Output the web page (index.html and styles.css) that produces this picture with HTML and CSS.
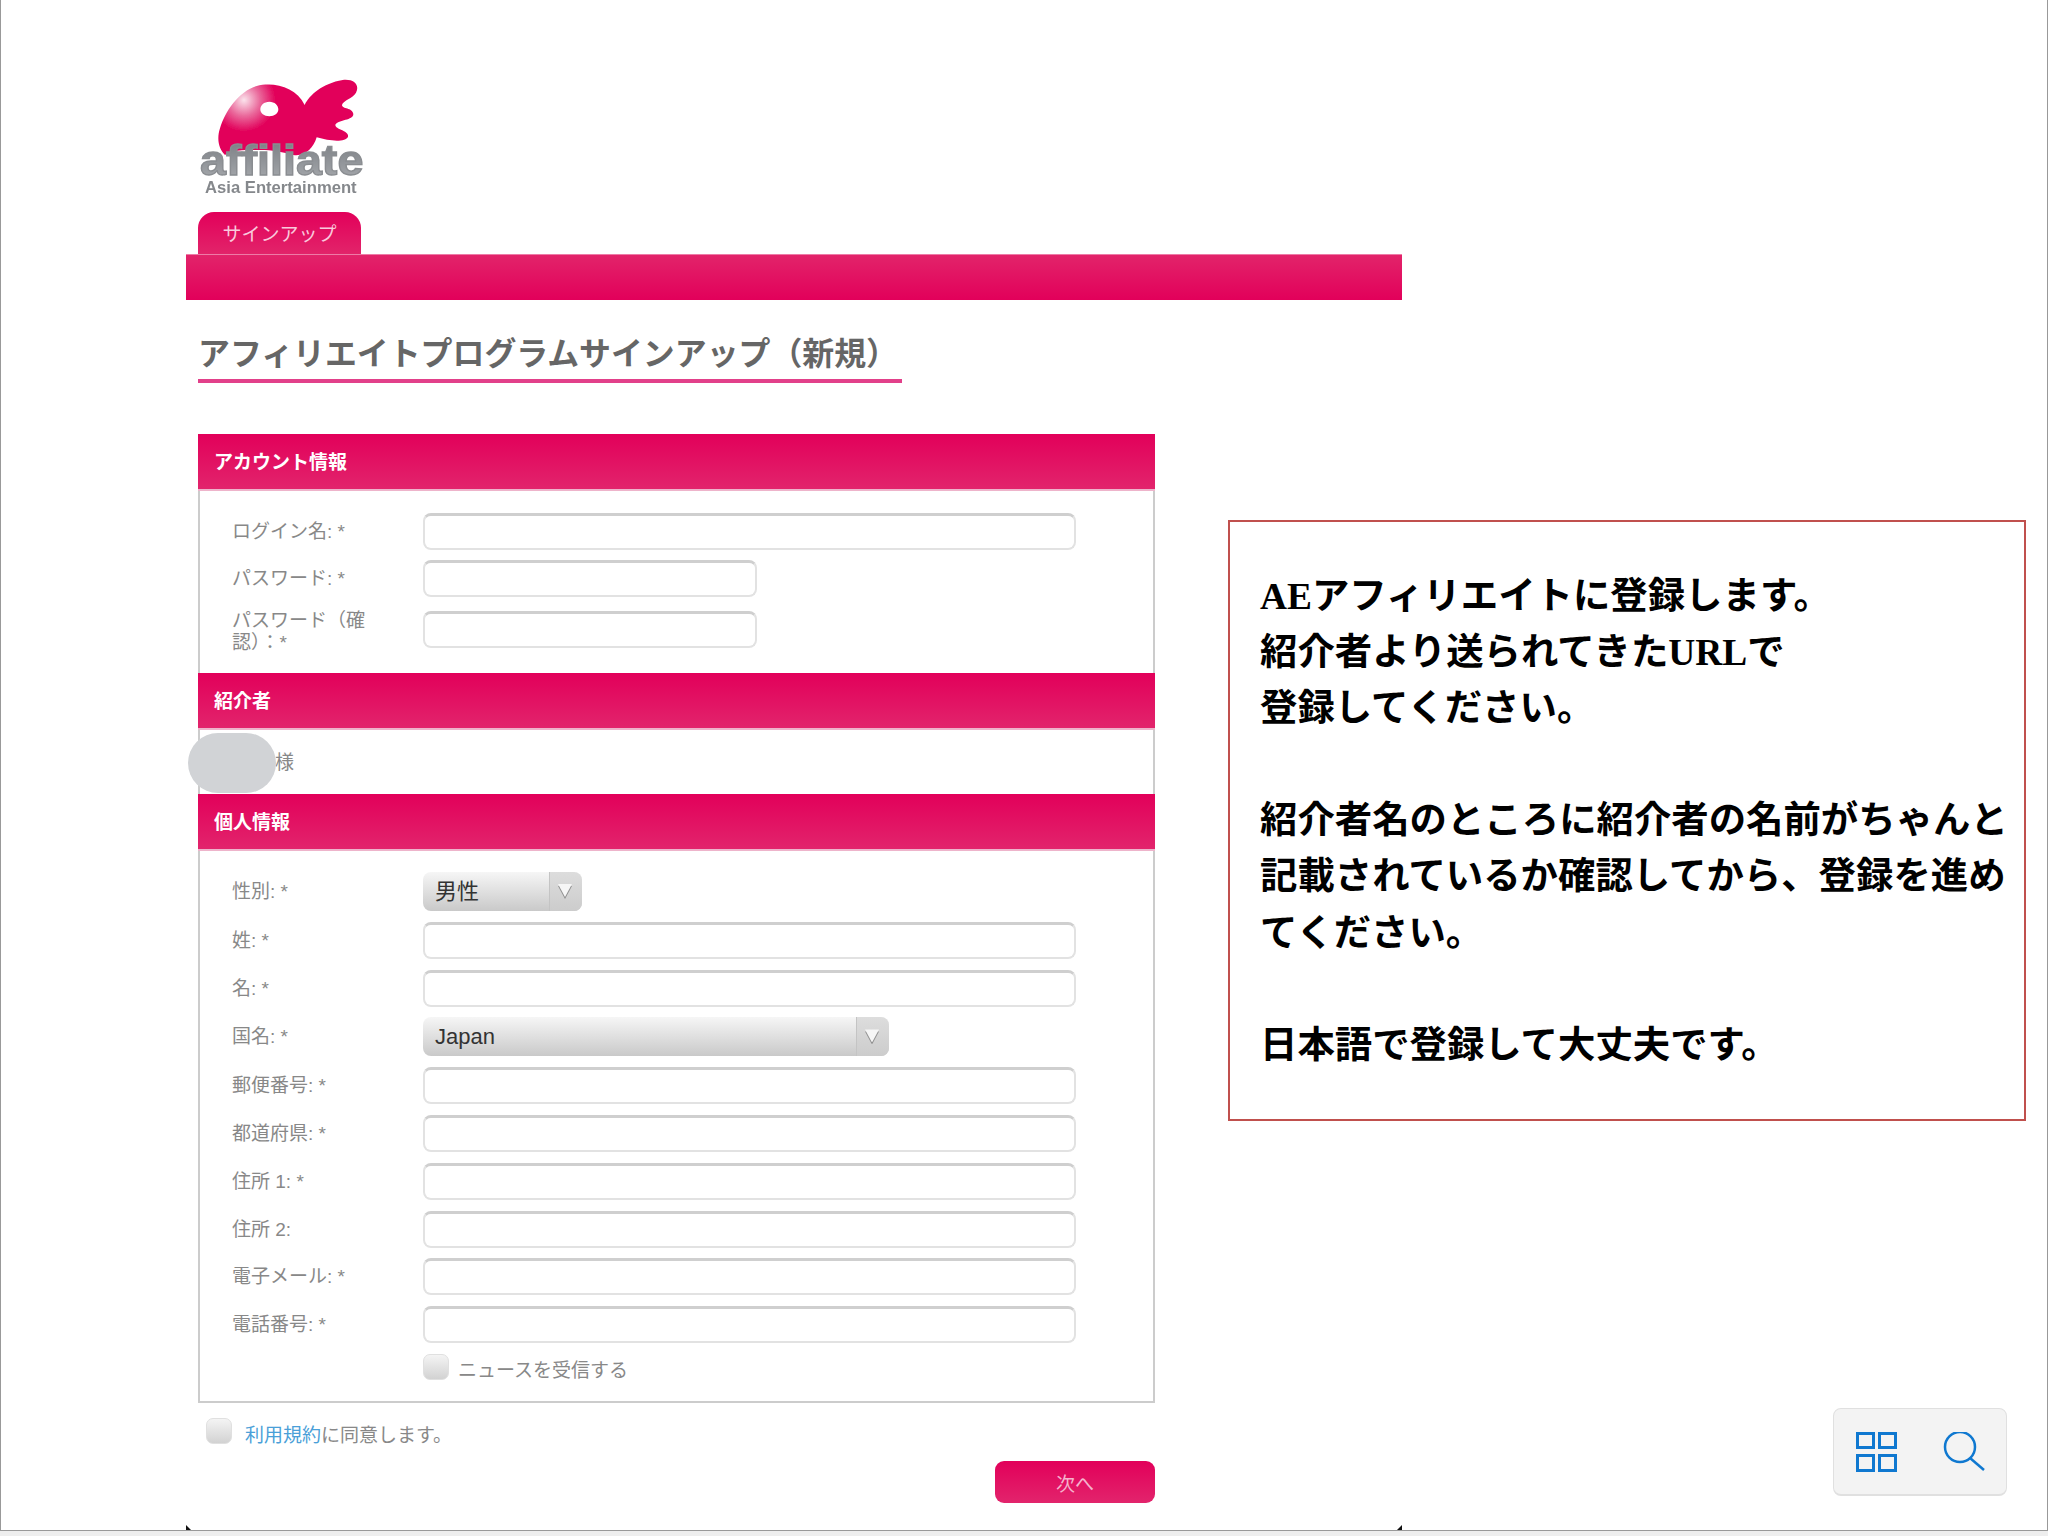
FILE: index.html
```html
<!DOCTYPE html>
<html lang="ja">
<head>
    <meta charset="UTF-8">
    <title>アフィリエイトプログラムサインアップ（新規）</title>
    <link rel="stylesheet" href="styles.css">
</head>
<body>
    <div class="screen">
        <div class="page">
            <svg class="logo" viewBox="84 84 501 360" width="167" height="120">
                <defs>
                    <radialGradient id="shine" gradientUnits="userSpaceOnUse" cx="222" cy="150" r="95">
                        <stop offset="0" stop-color="#fbe3ec"/>
                        <stop offset="0.5" stop-color="#ea6a9c"/>
                        <stop offset="1" stop-color="#e2005a"/>
                    </radialGradient>
                    <linearGradient id="word" x1="0" y1="0" x2="0" y2="1">
                        <stop offset="0" stop-color="#777b80"/>
                        <stop offset="1" stop-color="#a9acb0"/>
                    </linearGradient>
                    <filter id="soft"><feGaussianBlur stdDeviation="2"/></filter>
                </defs>
                <g filter="url(#soft)">
                    <path fill="url(#shine)" fill-rule="evenodd" d="M165 315 C145 295 140 265 150 235 C165 185 205 125 260 108 C310 95 378 110 404 165 C418 135 458 100 518 90 C552 86 570 105 558 128 C548 146 520 150 516 165 C516 178 548 172 550 192 C550 212 506 208 496 224 C496 240 538 240 534 260 C527 277 480 274 440 262 C430 295 405 320 370 315 C330 305 310 300 270 300 C220 300 180 300 165 315 Z M298 155 C282 155 271 166 271 178 C271 190 282 199 298 199 C314 199 325 190 325 178 C325 166 314 155 298 155 Z"/>
                    <text class="logo-word" x="90" y="376" textLength="490" lengthAdjust="spacingAndGlyphs" fill="url(#word)" stroke="#8a8d91" stroke-width="4">affiliate</text>
                    <text class="logo-sub" x="105" y="430" textLength="455" lengthAdjust="spacingAndGlyphs">Asia Entertainment</text>
                </g>
            </svg>
            <div class="tab">サインアップ</div>
            <div class="bar"></div>
            <h1 class="title">アフィリエイトプログラムサインアップ（新規）</h1>

            <div class="panel">
                <div class="panel-head">アカウント情報</div>
                <div class="panel-body account">
                    <div class="row">
                        <label>ログイン名: *</label>
                        <input class="text" type="text">
                    </div>
                    <div class="row">
                        <label>パスワード: *</label>
                        <input class="text short" type="password">
                    </div>
                    <div class="row tall">
                        <label>パスワード（確認）：*</label>
                        <input class="text short" type="password">
                    </div>
                </div>

                <div class="panel-head">紹介者</div>
                <div class="panel-body referrer">様</div>

                <div class="panel-head">個人情報</div>
                <div class="panel-body personal">
                    <div class="row">
                        <label>性別: *</label>
                        <div class="select gender"><span>男性</span><i class="arrow"></i></div>
                    </div>
                    <div class="row">
                        <label>姓: *</label>
                        <input class="text" type="text">
                    </div>
                    <div class="row">
                        <label>名: *</label>
                        <input class="text" type="text">
                    </div>
                    <div class="row">
                        <label>国名: *</label>
                        <div class="select country"><span>Japan</span><i class="arrow"></i></div>
                    </div>
                    <div class="row">
                        <label>郵便番号: *</label>
                        <input class="text" type="text">
                    </div>
                    <div class="row">
                        <label>都道府県: *</label>
                        <input class="text" type="text">
                    </div>
                    <div class="row">
                        <label>住所 1: *</label>
                        <input class="text" type="text">
                    </div>
                    <div class="row">
                        <label>住所 2:</label>
                        <input class="text" type="text">
                    </div>
                    <div class="row">
                        <label>電子メール: *</label>
                        <input class="text" type="text">
                    </div>
                    <div class="row">
                        <label>電話番号: *</label>
                        <input class="text" type="text">
                    </div>
                    <div class="row">
                        <label></label>
                        <div class="check-line">
                            <input class="check" type="checkbox">
                            <span>ニュースを受信する</span>
                        </div>
                    </div>
                </div>
            </div>

            <div class="terms">
                <input class="check" type="checkbox">
                <span><a href="#">利用規約</a>に同意します。</span>
            </div>
            <div class="actions">
                <button class="next" type="button">次へ</button>
            </div>
        </div>

        <!-- things lying on top of the form -->
        <div class="name-mask"></div>

        <div class="note">
            <p>AEアフィリエイトに登録します。<br>紹介者より送られてきたURLで<br>登録してください。</p>
            <p>紹介者名のところに紹介者の名前がちゃんと<br>記載されているか確認してから、登録を進め<br>てください。</p>
            <p>日本語で登録して大丈夫です。</p>
        </div>

        <div class="tools">
            <svg width="42" height="42" viewBox="0 0 42 42" fill="none" stroke="#0f78d0" stroke-width="3">
                <rect x="1.5" y="1.5" width="16" height="14"/>
                <rect x="23.5" y="1.5" width="16" height="14"/>
                <rect x="1.5" y="23.5" width="16" height="15"/>
                <rect x="23.5" y="23.5" width="16" height="15"/>
            </svg>
            <svg width="42" height="42" viewBox="0 0 42 42" fill="none" stroke="#0f78d0" stroke-width="2.5">
                <circle cx="17" cy="15" r="15"/>
                <path d="M27 26 L41 38"/>
            </svg>
        </div>

        <i class="corner corner-left"></i>
        <i class="corner corner-right"></i>
    </div>
</body>
</html>
```

FILE: styles.css
```css
html, body {
    margin: 0;
    padding: 0;
    height: 100%;
    overflow: hidden;
    background: #eeeeee;
}
body {
    font-family: "Liberation Sans", "Noto Sans CJK JP", sans-serif;
    font-size: 19px;
    color: #888888;
}
.screen {
    position: relative;
    height: 1531px;
    padding-top: 78px;
    box-sizing: border-box;
    background: #ffffff;
    box-shadow: inset 1px 0 #999999, inset -1px 0 #999999, inset 0 -1px #999999;
}
.page {
    width: 1216px;
    margin-left: 186px;
}

/* logo + tab bar */
.logo {
    display: block;
    margin-left: 12px;
}
.logo-word {
    font-family: "Liberation Sans", sans-serif;
    font-weight: bold;
    font-size: 130px;
}
.logo-sub {
    font-family: "Liberation Sans", sans-serif;
    font-weight: bold;
    font-size: 47px;
    fill: #85888c;
}
.tab {
    width: 163px;
    height: 42px;
    margin: 14px 0 0 12px;
    box-sizing: border-box;
    padding-top: 10px;
    text-align: center;
    line-height: 26px;
    color: #f9c9dc;
    background: linear-gradient(#e2005a, #e2246a);
    border-radius: 16px 16px 0 0;
}
.bar {
    height: 46px;
    box-sizing: border-box;
    border-top: 1px solid #ee7aa6;
    background: linear-gradient(#e2246a, #e2005a);
}
.title {
    width: 704px;
    margin: 32px 0 0 12px;
    padding-bottom: 2px;
    font-size: 31.9px;
    line-height: 45px;
    font-weight: bold;
    color: #666666;
    white-space: nowrap;
    border-bottom: 4px solid #e2408a;
}

/* form panel */
.panel {
    width: 957px;
    margin: 51px 0 0 12px;
    box-sizing: border-box;
    border: solid #cccccc;
    border-width: 0 2px 2px;
}
.panel-head {
    height: 57px;
    margin: 0 -2px;
    box-sizing: border-box;
    padding-left: 16px;
    font-weight: bold;
    line-height: 57px;
    color: #ffffff;
    background: linear-gradient(#e2005a, #e2246c);
    border-bottom: 2px solid #eeb4cb;
}
.panel-body {
    box-sizing: border-box;
}
.account {
    height: 182px;
    padding-top: 22px;
}
.account .row + .row {
    margin-top: 10px;
}
.account .row.tall {
    margin-top: 8.5px;
}
.referrer {
    height: 64px;
    padding-left: 75px;
    line-height: 66px;
}
.personal {
    display: flex;
    flex-direction: column;
    gap: 10.8px;
    height: 550px;
    padding-top: 21px;
}
.row {
    display: flex;
    align-items: center;
}
.row label {
    width: 140px;
    margin: 0 51px 0 32px;
    padding-top: 1px;
    line-height: 22px;
    flex-shrink: 0;
}
.tall label {
    padding-top: 4px;
}
.text {
    width: 653px;
    height: 37px;
    padding: 0 8px;
    box-sizing: border-box;
    background: #ffffff;
    border: 2px solid #e2e2e2;
    border-top: 3px solid #cfcfcf;
    border-radius: 8px;
}
.text.short {
    width: 334px;
}
.select {
    display: flex;
    justify-content: space-between;
    height: 39px;
    box-sizing: border-box;
    padding-left: 12px;
    font-size: 22px;
    line-height: 40px;
    color: #333333;
    background: linear-gradient(#f6f6f6, #c9c9c9);
    border-radius: 8px;
    overflow: hidden;
}
.select.gender {
    width: 159px;
}
.select.country {
    width: 466px;
}
.arrow {
    position: relative;
    width: 32px;
    background: linear-gradient(#dddddd, #cccccc);
    border-left: 1px solid #c4c4c4;
}
.arrow::before,
.arrow::after {
    content: "";
    position: absolute;
    left: 8px;
    width: 14px;
    height: 13px;
    clip-path: polygon(0 0, 100% 0, 50% 100%);
}
.arrow::before {
    top: 14px;
    background: #8f8f8f;
}
.arrow::after {
    top: 12px;
    background: #f6f6f6;
}
.check {
    appearance: none;
    display: block;
    width: 26px;
    height: 26px;
    margin: 0;
    background: linear-gradient(#f4f4f4, #d2d2d2);
    border: 1px solid #e0e0e0;
    border-radius: 7px;
    box-sizing: border-box;
}
.check-line {
    display: flex;
    align-items: center;
    gap: 9px;
    height: 26px;
}
.check-line span {
    margin-top: 4px;
}
.terms {
    display: flex;
    gap: 13px;
    height: 26px;
    margin: 15px 0 0 20px;
    line-height: 36px;
}
.terms a {
    color: #4a9fd8;
    text-decoration: none;
}
.actions {
    display: flex;
    justify-content: flex-end;
    width: 969px;
    margin-top: 17px;
}
.next {
    width: 160px;
    height: 42px;
    padding: 0;
    font: inherit;
    color: #f5b3cd;
    background: linear-gradient(#e2005a, #e2246c);
    border: 0;
    border-radius: 9px;
}

/* overlays */
.name-mask {
    position: absolute;
    left: 188px;
    top: 733px;
    width: 88px;
    height: 60px;
    background: #d1d3d6;
    border-radius: 30px;
}
.note {
    position: absolute;
    left: 1228px;
    top: 520px;
    width: 798px;
    height: 601px;
    box-sizing: border-box;
    padding: 47px 0 0 30px;
    font-family: "Liberation Serif", "Noto Sans CJK JP", serif;
    font-size: 37.4px;
    font-weight: bold;
    line-height: 56.1px;
    color: #000000;
    white-space: nowrap;
    border: 2px solid #c0504d;
}
.note p {
    margin: 0 0 56.1px;
}
.tools {
    position: absolute;
    left: 1833px;
    top: 1408px;
    display: flex;
    gap: 45px;
    width: 174px;
    height: 88px;
    box-sizing: border-box;
    padding: 23px 0 0 22px;
    background: #f3f3f3;
    border: 1px solid #e0e0e0;
    border-bottom-width: 2px;
    border-radius: 8px;
}
.corner {
    position: absolute;
    top: 1525px;
    width: 5px;
    height: 5px;
    background: #111111;
}
.corner-left {
    left: 186px;
    clip-path: polygon(0 0, 100% 100%, 0 100%);
}
.corner-right {
    left: 1397px;
    clip-path: polygon(100% 0, 100% 100%, 0 100%);
}
```
